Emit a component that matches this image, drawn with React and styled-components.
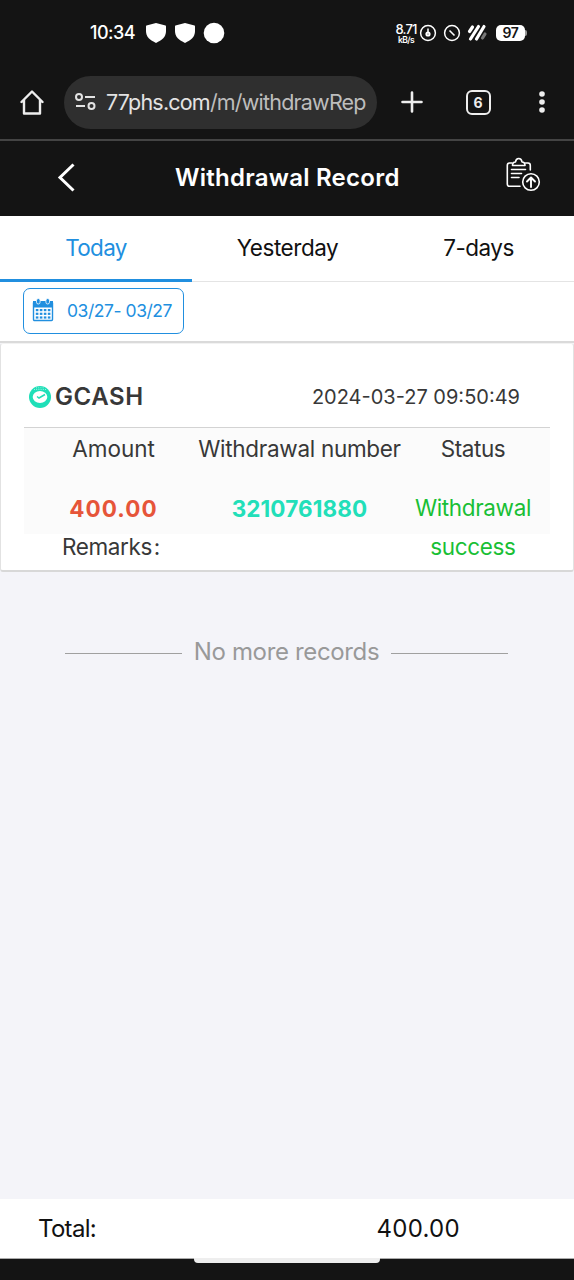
import React from "react";
import styled, { createGlobalStyle } from "styled-components";

const GlobalStyle = createGlobalStyle`
  * {
    box-sizing: border-box;
  }

  body {
    margin: 0;
    background: #141414;
    font-family: Inter, "Liberation Sans", sans-serif;
    font-size: 22.5px;
    color: #111;
  }

  svg {
    flex-shrink: 0;
  }
`;

const Screen = styled.div`
  width: 574px;
  height: 1280px;
  display: flex;
  flex-direction: column;
  overflow: hidden;
`;

const Text = styled.span`
  white-space: nowrap;
  font-size: ${(props) => props.$size || 22.5}px;
  font-weight: ${(props) => props.$weight || 400};
  letter-spacing: ${(props) => props.$spacing || 0}px;
  color: ${(props) => props.$color || "inherit"};
`;

const StatusBar = styled.div`
  height: 65px;
  padding: 0 47px 0 90px;
  display: flex;
  align-items: center;
  color: #fff;
`;

const StatusLeft = styled.div`
  flex: 1;
  display: flex;
  align-items: center;
`;

const Clock = styled(Text)`
  width: 55px;
`;

const Speed = styled.div`
  width: 24px;
  display: flex;
  flex-direction: column;
  align-items: center;
  padding-top: 1px;
  line-height: 14px;
`;

const SpeedUnit = styled(Text)`
  line-height: 9px;
`;

const Battery = styled.div`
  width: 29px;
  height: 16px;
  margin-left: 8px;
  border-radius: 5px;
  background: #fff;
  color: #141414;
  display: flex;
  align-items: center;
  justify-content: center;
`;

const BatteryTip = styled.div`
  width: 2px;
  height: 6px;
  background: #999;
  border-radius: 0 2px 2px 0;
`;

const BrowserBar = styled.div`
  height: 76px;
  padding: 0 20px;
  border-bottom: 2px solid #444;
  display: flex;
  align-items: center;
`;

const AddressPill = styled.div`
  width: 313px;
  height: 53px;
  margin-left: 20px;
  padding-left: 11px;
  border-radius: 27px;
  background: #2f2f2f;
  color: #e3e3e3;
  display: flex;
  align-items: center;
  gap: 10px;
`;

const UrlPath = styled.span`
  color: #bdbdbd;
`;

const BrowserActions = styled.div`
  flex: 1;
  padding-left: 23px;
  display: flex;
  align-items: center;
  justify-content: space-between;
`;

const Header = styled.div`
  height: 75px;
  padding: 0 33px 3px 56px;
  display: flex;
  align-items: center;
  color: #fff;
`;

const HeaderTitle = styled(Text)`
  flex: 1;
  margin-left: 99px;
`;

const HeaderAction = styled.div`
  display: flex;
  padding-bottom: 5px;
`;

const Tabs = styled.div`
  height: 66px;
  display: flex;
  background: #fff;
`;

const Tab = styled.div`
  width: ${(props) => (props.$active ? 192 : 191)}px;
  height: 66px;
  padding-bottom: ${(props) => (props.$active ? 0 : 2)}px;
  border-bottom: ${(props) =>
    props.$active ? "3px solid #218fdf" : "1px solid #e4e4e4"};
  color: ${(props) => (props.$active ? "#218fdf" : "#111")};
  display: flex;
  align-items: center;
  justify-content: center;
`;

const FilterRow = styled.div`
  height: 61px;
  padding: 6px 23px 0;
  border-bottom: 2px solid #dadada;
  background: #fff;
`;

const DateButton = styled.div`
  width: 161px;
  height: 46px;
  padding: 0 0 2px 8px;
  border: 1px solid #218fdf;
  border-radius: 7px;
  color: #218fdf;
  display: flex;
  align-items: center;
  gap: 13px;
`;

const Records = styled.div`
  flex: 1;
  background: #f4f4f9;
`;

const Card = styled.div`
  height: 229px;
  padding: 0 23px;
  border: 1px solid #e2e2e2;
  border-top-color: #f2f2f2;
  border-bottom: 2px solid #d8d8d8;
  border-radius: 3px;
  background: #fff;
  color: #383838;
`;

const CardHead = styled.div`
  height: 84px;
  padding: 22px 30px 0 4px;
  border-bottom: 1px solid #d3d3d3;
  display: flex;
  align-items: center;
`;

const Brand = styled.div`
  flex: 1;
  display: flex;
  align-items: center;
  gap: 3px;
`;

const Columns = styled.div`
  height: 106px;
  display: grid;
  grid-template-columns: 179px 193px 154px;
  grid-template-rows: 42px 1fr;
  justify-items: center;
  background: #fbfbfb;
`;

const Cell = styled.div`
  padding-top: ${(props) => props.$top || 0}px;
  line-height: 39px;
  text-align: center;
`;

const Remarks = styled.div`
  padding-left: 38px;
  line-height: 25px;
  display: flex;
  gap: 2px;
`;

const EmptyLine = styled.div`
  height: 30px;
  margin: 64px 66px 0 65px;
  display: flex;
  align-items: center;
  justify-content: space-between;
  color: #999;

  &:before,
  &:after {
    content: "";
    width: 117px;
    height: 1px;
    margin-top: 5px;
    background: #a0a0a0;
  }
`;

const Total = styled.div`
  height: 60px;
  padding: 0 114px 0 38px;
  display: flex;
  align-items: center;
  justify-content: space-between;
  background: #fff;
  border-bottom: 1px solid #aaa;
`;

const NavBar = styled.div`
  height: 21px;
  display: flex;
  justify-content: center;
`;

const Handle = styled.div`
  width: 186px;
  height: 5px;
  margin-top: -1px;
  border-radius: 0 0 4px 4px;
  background: #eee;
`;

const ShieldIcon = () => (
  <svg width="29" height="22" viewBox="0 0 29 22">
    <path
      d="M11 1 L20.5 3.5 Q21 3.7 21 4.5 V9 C21 15 17 18 11 21 C5 18 1 15 1 9 V4.5 Q1 3.7 1.5 3.5 Z"
      fill="#fff"
    />
  </svg>
);

const DotIcon = () => (
  <svg width="22" height="22" viewBox="0 0 22 22">
    <circle cx="11" cy="11" r="10.3" fill="#fff" />
  </svg>
);

const StatusIcons = () => (
  <svg width="70" height="20" viewBox="418 23 70 20" fill="none" stroke="#fff">
    <circle cx="428" cy="33" r="7.4" strokeWidth="1.5" />
    <path d="M428 28.5 V32" strokeWidth="1.5" />
    <circle cx="428" cy="34" r="1.6" strokeWidth="2" />
    <circle cx="452" cy="33" r="7.4" strokeWidth="1.5" />
    <path d="M449.5 30.5 L454.5 35.5" strokeWidth="1.6" />
    <g strokeWidth="3.2" strokeLinecap="round">
      <path d="M469.5 31.5 L472.5 27 M470.5 39 L478.5 26.5 M476.5 39 L484 26.5" />
      <path d="M482.5 38 L485 34" stroke="#777" />
    </g>
  </svg>
);

const HomeIcon = () => (
  <svg width="24" height="27" viewBox="0 0 24 27" fill="none">
    <path
      d="M1.5 13 L12 2.5 L22.5 13 M4 11 V24.5 H20 V11"
      stroke="#eee"
      strokeWidth="2.4"
      strokeLinejoin="round"
      strokeLinecap="round"
    />
  </svg>
);

const SiteInfoIcon = () => (
  <svg width="21" height="18" viewBox="0 0 21 18" fill="none" stroke="#e3e3e3" strokeWidth="2">
    <circle cx="4" cy="4" r="3" />
    <path d="M10 4 H20 M1 13 H10" />
    <circle cx="16.5" cy="13" r="3" />
  </svg>
);

const PlusIcon = () => (
  <svg width="24" height="24" viewBox="0 0 24 24">
    <path d="M12 2.5 V21.5 M2.5 12 H21.5" stroke="#eee" strokeWidth="2.6" strokeLinecap="round" />
  </svg>
);

const TabCount = styled.div`
  width: 25px;
  height: 25px;
  margin-left: 2px;
  border: 2.5px solid #eee;
  border-radius: 6px;
  color: #eee;
  display: flex;
  align-items: center;
  justify-content: center;
`;

const MoreIcon = () => (
  <svg width="24" height="24" viewBox="0 0 24 24" fill="#eee">
    <circle cx="12" cy="4" r="2.8" />
    <circle cx="12" cy="12" r="2.8" />
    <circle cx="12" cy="20" r="2.8" />
  </svg>
);

const BackIcon = () => (
  <svg width="20" height="30" viewBox="0 0 20 30" fill="none">
    <path d="M17.5 2.5 L4 15.5 L17.5 28.5" stroke="#fff" strokeWidth="3" />
  </svg>
);

const ReportIcon = () => (
  <svg
    width="36"
    height="36"
    viewBox="505 157 36 36"
    fill="none"
    stroke="#fff"
    strokeWidth="1.6"
    strokeLinecap="round"
    strokeLinejoin="round"
  >
    <path d="M512 163 H509.5 Q507.3 163 507.3 165.5 V184 Q507.3 186.3 509.5 186.3 H520" />
    <path d="M525.5 163 H528 Q530.3 163 530.3 165.5 V170" />
    <path d="M512.5 165.5 Q512.5 162 515.5 162 Q516 158.5 518.7 158.5 Q521.5 158.5 522 162 Q525 162 525 165.5 Z" />
    <path d="M511.5 169.5 H525.5 M511.5 173.5 H521.5 M511.5 177.5 H519" />
    <circle cx="531" cy="182" r="8.3" />
    <path d="M531 187 V178 M527 181.5 L531 177.5 L535 181.5" strokeWidth="1.9" />
  </svg>
);

const dots = [0, 1, 2, 3].flatMap((col) => [0, 1, 2].map((row) => [col, row]));

const CalendarIcon = () => (
  <svg width="22" height="24" viewBox="0 0 22 24">
    <rect x="1.5" y="4" width="19" height="18.5" rx="1" fill="#fff" stroke="#218fdf" strokeWidth="1.4" />
    <rect x="1" y="3" width="20" height="6.5" fill="#218fdf" />
    <rect x="4.5" y="0.5" width="3.6" height="5.5" rx="1.8" fill="#218fdf" stroke="#fff" strokeWidth="0.8" />
    <rect x="13.9" y="0.5" width="3.6" height="5.5" rx="1.8" fill="#218fdf" stroke="#fff" strokeWidth="0.8" />
    {dots.map(([col, row]) => (
      <rect key={`${col}-${row}`} x={3.8 + col * 4} y={11 + row * 3.7} width="2.6" height="2.2" fill="#218fdf" />
    ))}
  </svg>
);

const GcashIcon = () => (
  <svg width="24" height="24" viewBox="0 0 24 24" fill="none">
    <circle cx="12" cy="12" r="11" fill="#1fdfb8" />
    <path d="M6 4.5 H18 M8 2.8 H16" stroke="#b5f5e7" strokeWidth="0.8" strokeDasharray="1 1.2" />
    <ellipse cx="12" cy="12" rx="7.3" ry="6" fill="#fff" />
    <path d="M9 11.5 L11 13 L17 9.5" stroke="#1fdfb8" strokeWidth="1.5" />
  </svg>
);

const App = () => {
  return (
    <Screen>
      <GlobalStyle />
      <StatusBar>
        <StatusLeft>
          <Clock $size={18} $weight={500} $spacing={-0.5}>10:34</Clock>
          <ShieldIcon />
          <ShieldIcon />
          <DotIcon />
        </StatusLeft>
        <Speed>
          <Text $size={13} $weight={500} $spacing={-0.9}>8.71</Text>
          <SpeedUnit $size={8.5} $weight={600} $spacing={-0.6}>kB/s</SpeedUnit>
        </Speed>
        <StatusIcons />
        <Battery>
          <Text $size={14} $weight={600} $spacing={-0.4}>97</Text>
        </Battery>
        <BatteryTip />
      </StatusBar>

      <BrowserBar>
        <HomeIcon />
        <AddressPill>
          <SiteInfoIcon />
          <Text $size={21.5} $spacing={-0.8}>
            77phs.com<UrlPath>/m/withdrawRep</UrlPath>
          </Text>
        </AddressPill>
        <BrowserActions>
          <PlusIcon />
          <TabCount>
            <Text $size={14} $weight={700}>6</Text>
          </TabCount>
          <MoreIcon />
        </BrowserActions>
      </BrowserBar>

      <Header>
        <BackIcon />
        <HeaderTitle $size={24} $weight={600} $spacing={0.25}>Withdrawal Record</HeaderTitle>
        <HeaderAction>
          <ReportIcon />
        </HeaderAction>
      </Header>

      <Tabs>
        <Tab $active><Text $spacing={-0.7}>Today</Text></Tab>
        <Tab><Text $spacing={-0.45}>Yesterday</Text></Tab>
        <Tab><Text $spacing={-0.5}>7-days</Text></Tab>
      </Tabs>

      <FilterRow>
        <DateButton>
          <CalendarIcon />
          <Text $size={17.5} $spacing={-0.45}>03/27- 03/27</Text>
        </DateButton>
      </FilterRow>

      <Records>
        <Card>
          <CardHead>
            <Brand>
              <GcashIcon />
              <Text $size={24} $weight={600} $spacing={0.6}>GCASH</Text>
            </Brand>
            <Text $size={20}>2024-03-27 09:50:49</Text>
          </CardHead>
          <Columns>
            <Cell $top={1}><Text>Amount</Text></Cell>
            <Cell $top={1}><Text $spacing={-0.3}>Withdrawal number</Text></Cell>
            <Cell $top={1}><Text $spacing={-0.4}>Status</Text></Cell>
            <Cell $top={19}><Text $weight={700} $spacing={1.1} $color="#e65539">400.00</Text></Cell>
            <Cell $top={19}><Text $weight={700} $spacing={0.1} $color="#22dfb9">3210761880</Text></Cell>
            <Cell $top={18}>
              <Text $spacing={-0.35} $color="#19bf35">Withdrawal<br />success</Text>
            </Cell>
          </Columns>
          <Remarks>
            <Text $spacing={-0.4}>Remarks</Text>
            <Text>:</Text>
          </Remarks>
        </Card>
        <EmptyLine><Text $size={24} $spacing={-0.35}>No more records</Text></EmptyLine>
      </Records>

      <Total>
        <Text $size={24} $spacing={-0.7}>Total:</Text>
        <Text $size={24} $spacing={0.3}>400.00</Text>
      </Total>
      <NavBar>
        <Handle />
      </NavBar>
    </Screen>
  );
};

export default App;
